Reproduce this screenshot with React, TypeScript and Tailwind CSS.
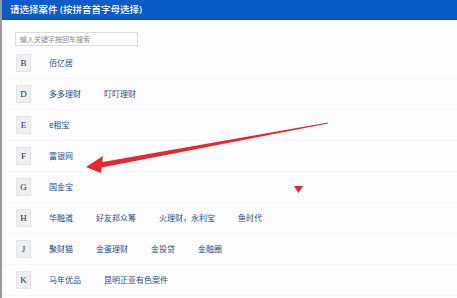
const rows: { letter: string; items: string[] }[] = [
  { letter: "B", items: ["佰亿居"] },
  { letter: "D", items: ["多多理财", "叮叮理财"] },
  { letter: "E", items: ["e租宝"] },
  { letter: "F", items: ["富银网"] },
  { letter: "G", items: ["国金宝"] },
  { letter: "H", items: ["华融道", "好友邦众筹", "火理财，永利宝", "鱼时代"] },
  { letter: "J", items: ["聚财猫", "金蛋理财", "金投贷", "金融圈"] },
  { letter: "K", items: ["马年优品", "昆明正亚有色案件"] },
]

export default function App() {
  return (
    <div
      className="relative w-[457px] h-[298px] overflow-hidden bg-[#fdfcfe] border-l-2 border-[#9a9a9a]"
      style={{ fontFamily: '"Noto Sans", "Noto Sans CJK SC", sans-serif' }}
    >
      <div className="h-[20px] bg-[#0a5cc9] border-b border-[#0b4ea8] flex items-center pl-[8px]">
        <span className="text-white text-[9.5px] leading-none font-medium">
          请选择案件 (按拼音首字母选择)
        </span>
      </div>

      <div className="pl-[13px] pt-[12px]">
        <div className="w-[123px] h-[14px] border border-[#dcdcdc] bg-white flex items-center pl-[4px]">
          <span className="text-[7px] leading-none text-[#8a8a8a]">输入关键字按回车搜索</span>
        </div>
      </div>

      <div className="flex flex-col pt-[2px]">
        {rows.map((row) => (
          <div
            key={row.letter}
            className="h-[31px] flex items-center pl-[14px] border-b border-[#f7f6f9]"
          >
            <div
              className="w-[15px] h-[18px] bg-[#efeff1] border border-[#e4e4e6] flex items-center justify-center text-[9px] text-[#333] leading-none"
              style={{ fontFamily: '"Liberation Serif", serif' }}
            >
              {row.letter}
            </div>
            <div className="flex gap-[23px] ml-[18px]">
              {row.items.map((item) => (
                <span key={item} className="text-[8px] leading-none text-[#234f88]">
                  {item}
                </span>
              ))}
            </div>
          </div>
        ))}
      </div>

      <svg
        className="absolute left-0 top-0 pointer-events-none"
        width="457"
        height="298"
        viewBox="0 0 457 298"
      >
        <polygon points="326,122.5 326,123.5 97,168 95,163" fill="#e8262c" />
        <polygon points="84,167 101,156 99,173" fill="#e8262c" />
        <polygon points="292,186 301,186 296.5,193" fill="#e0263a" />
      </svg>
    </div>
  )
}
